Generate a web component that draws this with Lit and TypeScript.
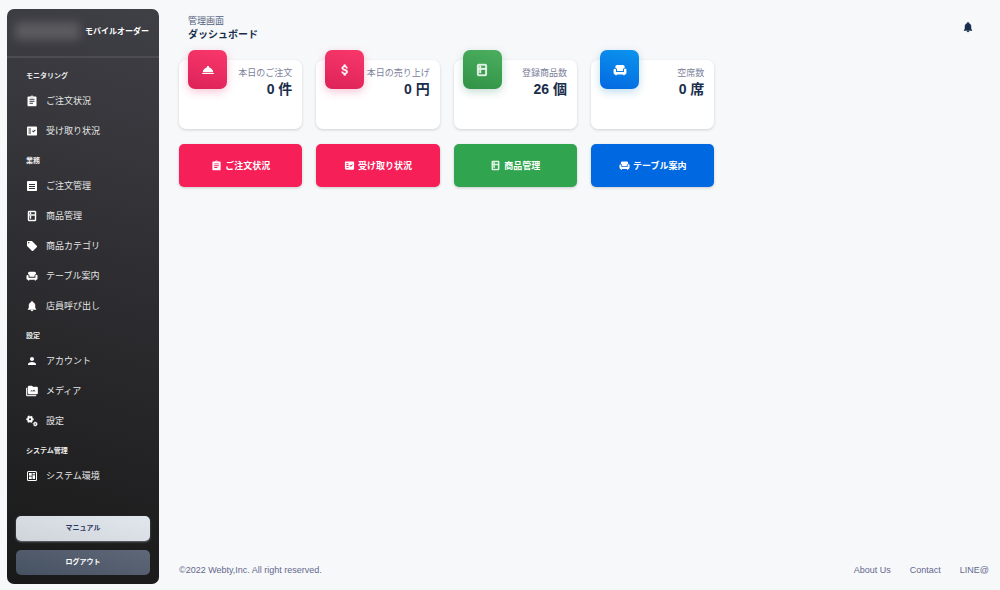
import { LitElement, html, css, svg } from "lit";
import { customElement, property } from "lit/decorators.js";

const GEAR = (cx: number, cy: number, r: number) => svg`
  <circle cx=${cx} cy=${cy} r=${r} fill="none" stroke="currentColor" stroke-width=${r * 0.95}></circle>
  <circle cx=${cx} cy=${cy} r=${r * 1.55} fill="none" stroke="currentColor" stroke-width=${r * 0.6}
    pathLength="12" stroke-dasharray="1.1 0.9" stroke-dashoffset="0.5"></circle>`;

const p = (d: string) => svg`<path fill="currentColor" fill-rule="evenodd" d=${d}></path>`;
const bold = (d: string) =>
  svg`<path fill="currentColor" stroke="currentColor" stroke-width="0.9" fill-rule="evenodd" d=${d}></path>`;

const ICONS: Record<string, unknown> = {
  assignment: p("M19 3h-4.18C14.4 1.84 13.3 1 12 1c-1.3 0-2.4.84-2.82 2H5c-1.1 0-2 .9-2 2v15.500c0 1.1.9 2 2 2h14c1.1 0 2-.9 2-2V5c0-1.1-.9-2-2-2zm-7 0c.55 0 1 .45 1 1s-.45 1-1 1-1-.45-1-1 .45-1 1-1zm2 14.500H7v-2h7v2zm3-4H7v-2h10v2zm0-4H7V7.500h10v2z"),
  check: p("M20 3H4c-1.1 0-2 .9-2 2v14c0 1.1.9 2 2 2h16c1.1 0 2-.9 2-2V5c0-1.1-.9-2-2-2zM10 17H5v-2h5v2zm0-4H5v-2h5v2zm0-4H5V7h5v2zm4.82 6L12 12.16l1.41-1.41 1.41 1.42L17.99 9l1.42 1.42L14.82 15z"),
  list: p("M20 2H4c-1.100 0-2 .9-2 2v16c0 1.100.9 2 2 2h16c1.100 0 2-.9 2-2V4c0-1.100-.9-2-2-2zM18 18H6v-2h12v2zm0-4H6v-2h12v2zm0-4H6V8h12v2z"),
  fridge: bold("M18 2.01L6 2c-1.1 0-2 .89-2 2v16c0 1.1.9 2 2 2h12c1.1 0 2-.9 2-2V4c0-1.1-.9-1.99-2-1.99zM18 20H6v-9.02h12V20zm0-11H6V4h12v5zM8 5h2v3H8zM8 12h2v5H8z"),
  tag: p("M21.41 11.58l-9-9C12.05 2.22 11.55 2 11 2H4c-1.1 0-2 .9-2 2v7c0 .55.22 1.05.59 1.42l9 9c.36.36.86.58 1.41.58.55 0 1.05-.22 1.41-.59l7-7c.37-.36.59-.86.59-1.41 0-.55-.23-1.06-.59-1.42zM5.5 7C4.67 7 4 6.33 4 5.5S4.67 4 5.5 4 7 4.67 7 5.5 6.33 7 5.5 7z"),
  sofa: p("M7 3.5h10a3 3 0 0 1 3 3v1.6a4 4 0 0 0-3 3.9v1.5H7V12a4 4 0 0 0-3-3.900V6.500a3 3 0 0 1 3-3zM3 10a2.200 2.200 0 0 1 2.200 2.200V15.500h13.600v-3.300A2.200 2.200 0 1 1 23 12.200V17a2.500 2.500 0 0 1-2.500 2.500H20V21h-2.500v-1.500h-11V21H4v-1.500h-.5A2.500 2.500 0 0 1 1 17v-4.800A2.200 2.200 0 0 1 3 10z"),
  bell: bold("M12 22c1.1 0 2-.9 2-2h-4c0 1.1.89 2 2 2zm6-6v-5c0-3.07-1.64-5.640-4.500-6.320V4c0-.83-.67-1.500-1.500-1.500s-1.500.67-1.500 1.500v.68C7.630 5.360 6 7.920 6 11v5l-2 2v1h16v-1l-2-2z"),
  person: p("M12 12c2.210 0 4-1.790 4-4s-1.790-4-4-4-4 1.790-4 4 1.790 4 4 4zm0 2c-2.670 0-8 1.340-8 4v2h16v-2c0-2.660-5.330-4-8-4z"),
  media: bold("M2 6H0.500v14c0 1.100.9 2 2 2h17.500v-1.500H2V6zm20-2h-8l-2-2H6c-1.100 0-2 .9-2 2v12c0 1.100.9 2 2 2h16c.8 0 1.500-.9 1.500-2V6c0-1.100-.7-2-1.500-2zM8 13l3-3 2.500 1.500 2.500-2.500 3.500 4z"),
  gears: svg`${GEAR(8, 8.5, 4)}${GEAR(18.5, 18, 2.6)}`,
  board: p("M5 2h14a3 3 0 0 1 3 3v14a3 3 0 0 1-3 3H5a3 3 0 0 1-3-3V5a3 3 0 0 1 3-3zM5 4a1 1 0 0 0-1 1v14a1 1 0 0 0 1 1h14a1 1 0 0 0 1-1V5a1 1 0 0 0-1-1zM6 6h5.500v5.500H6zM13 6h5v3h-5zM13 10.500h5V18h-5zM6 13h5.500v5H6z"),
  service: p("M2 17h20v2H2zm11.840-9.210c.1-.24.16-.51.16-.79 0-1.100-.9-2-2-2s-2 .9-2 2c0 .28.06.55.16.79C6.250 8.600 3.270 11.930 3 16h18c-.27-4.070-3.250-7.400-7.160-8.210z"),
  money: bold("M11.800 10.900c-2.270-.59-3-1.200-3-2.150 0-1.090 1.010-1.850 2.700-1.850 1.780 0 2.440.85 2.500 2.100h2.210c-.07-1.720-1.120-3.300-3.210-3.810V3h-3v2.160c-1.940.42-3.500 1.680-3.500 3.610 0 2.310 1.910 3.460 4.700 4.130 2.500.6 3 1.480 3 2.410 0 .69-.49 1.790-2.700 1.790-2.060 0-2.870-.92-2.980-2.100h-2.200c.12 2.190 1.760 3.420 3.680 3.830V21h3v-2.150c1.950-.37 3.500-1.500 3.500-3.550 0-2.840-2.430-3.810-4.700-4.400z"),
};

const MENU = [
  { title: "モニタリング", items: [["assignment", "ご注文状況"], ["check", "受け取り状況"]] },
  {
    title: "業務",
    items: [["list", "ご注文管理"], ["fridge", "商品管理"], ["tag", "商品カテゴリ"], ["sofa", "テーブル案内"], ["bell", "店員呼び出し"]],
  },
  { title: "設定", items: [["person", "アカウント"], ["media", "メディア"], ["gears", "設定"]] },
  { title: "システム管理", items: [["board", "システム環境"]] },
];

const STATS = [
  { icon: "service", tone: "pink", label: "本日のご注文", value: "0 件" },
  { icon: "money", tone: "pink", label: "本日の売り上げ", value: "0 円" },
  { icon: "fridge", tone: "green", label: "登録商品数", value: "26 個" },
  { icon: "sofa", tone: "blue", label: "空席数", value: "0 席" },
];

const ACTIONS = [
  { icon: "assignment", tone: "pink", label: "ご注文状況" },
  { icon: "check", tone: "pink", label: "受け取り状況" },
  { icon: "fridge", tone: "green", label: "商品管理" },
  { icon: "sofa", tone: "blue", label: "テーブル案内" },
];

@customElement("ui-icon")
class UiIcon extends LitElement {
  @property() name = "";
  static styles = css`
    :host { display: inline-flex; width: 12px; height: 12px; flex: none; }
    svg { width: 100%; height: 100%; display: block; }
  `;
  render() {
    return html`<svg viewBox="0 0 24 24" aria-hidden="true">${ICONS[this.name]}</svg>`;
  }
}

@customElement("side-menu")
class SideMenu extends LitElement {
  static styles = css`
    :host {
      display: flex;
      flex-direction: column;
      box-sizing: border-box;
      width: 152px;
      flex: none;
      border-radius: 7px;
      background: linear-gradient(195deg, #3f3f46, #191919);
      color: #fff;
    }
    .brand {
      display: flex;
      align-items: center;
      justify-content: flex-end;
      gap: 5px;
      box-sizing: border-box;
      height: 49px;
      padding: 0 10px 4px 8px;
      border-bottom: 2px solid #4c4c52;
      font-size: 8px;
      font-weight: 700;
      white-space: nowrap;
    }
    .logo {
      flex: 1;
      height: 18px;
      border-radius: 4px;
      background: #5c5b60;
      filter: blur(5px);
    }
    nav { padding: 3px 9px 0; }
    h2 {
      margin: 0;
      box-sizing: border-box;
      height: 25px;
      padding: 5px 0 0 10px;
      font-size: 7px;
      line-height: 20px;
      font-weight: 700;
      color: #ececec;
    }
    ul { margin: 0; padding: 0; list-style: none; }
    .item {
      display: flex;
      align-items: center;
      gap: 8px;
      height: 30px;
      padding-left: 10px;
      color: #e6e6e6;
      font-size: 9px;
      line-height: 12px;
      text-decoration: none;
    }
    .item ui-icon { color: #fff; }
    .foot {
      margin-top: auto;
      display: flex;
      flex-direction: column;
      gap: 9px;
      padding: 9px;
    }
    button {
      height: 25px;
      padding: 0 0 3px;
      border: 0;
      border-radius: 5px;
      font: inherit;
      font-size: 7px;
      font-weight: 700;
      cursor: pointer;
    }
    .manual { background: linear-gradient(15deg, #ced4da, #e2e7ee); color: #2c3560; box-shadow: 0 1px 2px #6b7076; }
    .logout { background: linear-gradient(15deg, #465162, #5f6878); color: #fff; }
  `;
  render() {
    return html`
      <div class="brand"><span class="logo"></span><span>モバイルオーダー</span></div>
      <nav>
        ${MENU.map(
          (s) => html`<h2>${s.title}</h2>
            <ul>
              ${s.items.map(
                ([icon, text]) => html`<li><a class="item" href="#"><ui-icon name=${icon}></ui-icon>${text}</a></li>`,
              )}
            </ul>`,
        )}
      </nav>
      <div class="foot">
        <button class="manual">マニュアル</button>
        <button class="logout">ログアウト</button>
      </div>
    `;
  }
}

@customElement("app-root")
class AppRoot extends LitElement {
  static styles = css`
    :host {
      display: flex;
      box-sizing: border-box;
      min-height: 100vh;
      gap: 20px;
      padding: 9px 11px 6px 7px;
      background: #f7f8fa;
      color: #1a2e4c;
      font-family: "Liberation Sans", "Noto Sans CJK JP", sans-serif;
      font-size: 9px;
    }
    main { flex: 1; min-width: 0; display: flex; flex-direction: column; }
    header {
      display: flex;
      justify-content: space-between;
      align-items: center;
      height: 35px;
      padding: 0 15px 0 9px;
    }
    .crumb { padding-top: 2px; line-height: 14px; color: #52627c; }
    h1 { margin: 0; font-size: 10px; line-height: 14px; font-weight: 700; }
    .bell { display: flex; padding: 0; border: 0; background: none; color: #1a2e4c; cursor: pointer; }
    .grid {
      display: grid;
      grid-template-columns: repeat(6, 1fr);
      gap: 15px 14px;
    }
    .stats { margin-top: 16px; }
    .actions { margin-top: 15px; }
    .card {
      box-sizing: border-box;
      display: flex;
      justify-content: space-between;
      height: 69px;
      padding: 0 10px 0 9px;
      border-radius: 7px;
      background: #fff;
      box-shadow: 0 1px 3px rgba(0, 0, 0, 0.16);
    }
    .badge {
      display: flex;
      align-items: center;
      justify-content: center;
      width: 39px;
      height: 39px;
      margin-top: -10px;
      border-radius: 7px;
      color: #fff;
      flex: none;
    }
    .badge ui-icon { width: 14px; height: 14px; }
    .badge.pink { background: linear-gradient(195deg, #f9386b, #dc2258); box-shadow: 0 3px 8px rgba(233, 30, 99, 0.25); }
    .badge.green { background: linear-gradient(195deg, #4cae5e, #2f9245); box-shadow: 0 3px 8px rgba(30, 120, 90, 0.25); }
    .badge.blue { background: linear-gradient(195deg, #0c94ee, #0368e0); box-shadow: 0 3px 8px rgba(0, 120, 190, 0.25); }
    .figures { padding-top: 6px; text-align: right; white-space: nowrap; }
    .label { margin: 0; line-height: 14px; color: #7b809a; }
    .value { margin: 0; font-size: 14px; line-height: 19px; font-weight: 700; }
    .action {
      display: flex;
      align-items: center;
      justify-content: center;
      gap: 3px;
      height: 43px;
      border-radius: 5px;
      color: #fff;
      font-weight: 700;
      text-decoration: none;
      box-shadow: 0 1px 3px rgba(0, 0, 0, 0.18);
    }
    .action ui-icon { width: 11px; height: 11px; }
    .action.pink { background: #f61f58; }
    .action.green { background: #30a44e; }
    .action.blue { background: #0068e1; }
    footer {
      display: flex;
      justify-content: space-between;
      margin-top: auto;
      padding-bottom: 8px;
      line-height: 12px;
      color: #63698c;
    }
    .links { display: flex; gap: 19px; }
    .links a { color: inherit; text-decoration: none; }
  `;
  render() {
    return html`
      <side-menu></side-menu>
      <main>
        <header>
          <div>
            <div class="crumb">管理画面</div>
            <h1>ダッシュボード</h1>
          </div>
          <button class="bell" aria-label="通知"><ui-icon name="bell"></ui-icon></button>
        </header>
        <section class="grid stats">
          ${STATS.map(
            (s) => html`<article class="card">
              <div class="badge ${s.tone}"><ui-icon name=${s.icon}></ui-icon></div>
              <div class="figures">
                <p class="label">${s.label}</p>
                <p class="value">${s.value}</p>
              </div>
            </article>`,
          )}
        </section>
        <section class="grid actions">
          ${ACTIONS.map(
            (a) => html`<a class="action ${a.tone}" href="#"><ui-icon name=${a.icon}></ui-icon>${a.label}</a>`,
          )}
        </section>
        <footer>
          <span>©2022 Webty,Inc. All right reserved.</span>
          <div class="links"><a href="#">About Us</a><a href="#">Contact</a><a href="#">LINE@</a></div>
        </footer>
      </main>
    `;
  }
}
